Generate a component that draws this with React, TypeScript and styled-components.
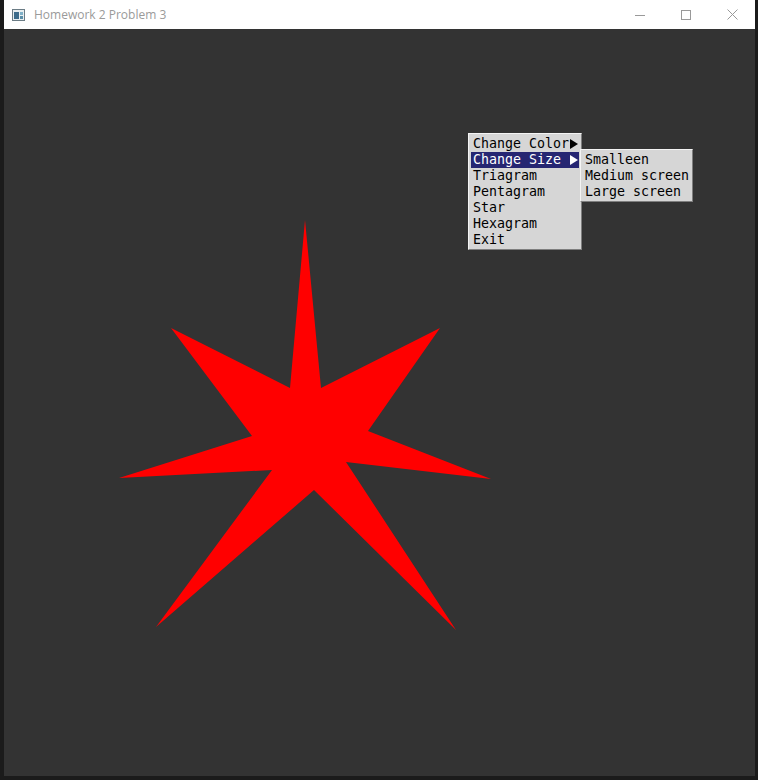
import React from "react";
import styled, { createGlobalStyle } from "styled-components";

const Global = createGlobalStyle`
  html, body { margin: 0; padding: 0; background: #1b1b1b; }
  body { width: 758px; height: 780px; overflow: hidden; }
`;

const Screen = styled.div`
  width: 758px;
  height: 780px;
  display: flex;
  flex-direction: row;
  background: #1b1b1b;
`;

const SideStrip = styled.div<{ $w: number }>`
  width: ${(p) => p.$w}px;
  flex: none;
  background: #1b1b1b;
`;

const Window = styled.div`
  width: 751px;
  height: 776px;
  display: flex;
  flex-direction: column;
  flex: none;
`;

const TitleBar = styled.div`
  height: 29px;
  background: #ffffff;
  display: flex;
  align-items: center;
  flex: none;
`;

const AppIcon = styled.svg`
  margin-left: 8px;
  width: 13px;
  height: 12px;
  flex: none;
`;

const Title = styled.div`
  margin-left: 9px;
  font-family: "Open Sans", "Noto Sans", sans-serif;
  font-size: 12px;
  color: #9a9a9a;
  flex: 1;
  margin-top: -1px;
`;

const Controls = styled.div`
  display: flex;
  height: 29px;
`;

const CtrlButton = styled.div`
  width: 46px;
  height: 29px;
  display: flex;
  align-items: center;
  justify-content: center;
`;

const Canvas = styled.div`
  position: relative;
  flex: 1;
  background: #333333;
  overflow: hidden;
`;

const StarSvg = styled.svg`
  position: absolute;
  left: 0;
  top: 0;
  width: 751px;
  height: 747px;
`;

const Menu = styled.div<{ $x: number; $y: number; $w: number }>`
  position: absolute;
  left: ${(p) => p.$x}px;
  top: ${(p) => p.$y}px;
  width: ${(p) => p.$w}px;
  box-sizing: border-box;
  background: #d6d6d6;
  border-top: 1px solid #f4f4f4;
  border-left: 1px solid #f4f4f4;
  border-right: 1px solid #7e7e7e;
  border-bottom: 1px solid #7e7e7e;
  padding: 2px 2px 1px 2px;
  display: flex;
  flex-direction: column;
`;

const Item = styled.div<{ $active?: boolean }>`
  position: relative;
  height: 16px;
  line-height: 16px;
  padding-left: 2px;
  font-family: "DejaVu Sans Mono", "Liberation Mono", monospace;
  font-size: 13.29px;
  white-space: pre;
  color: ${(p) => (p.$active ? "#ffffff" : "#000000")};
  background: ${(p) => (p.$active ? "#262672" : "transparent")};
`;

const Arrow = styled.span<{ $active?: boolean }>`
  position: absolute;
  right: 1px;
  top: 3px;
  width: 0;
  height: 0;
  border-top: 5px solid transparent;
  border-bottom: 5px solid transparent;
  border-left: 8px solid ${(p) => (p.$active ? "#ffffff" : "#000000")};
`;

const mainItems = [
  { label: "Change Color", sub: true },
  { label: "Change Size", sub: true, active: true },
  { label: "Triagram" },
  { label: "Pentagram" },
  { label: "Star" },
  { label: "Hexagram" },
  { label: "Exit" },
];

const subItems = ["Smalleen", "Medium screen", "Large screen"];

const starPoints = [
  [305, 220],
  [321, 388],
  [440, 328],
  [368, 431],
  [491, 479],
  [346, 462],
  [456, 630],
  [314, 490],
  [156, 627],
  [272, 470],
  [119, 478],
  [252, 436],
  [171, 328],
  [290, 388],
]
  .map(([x, y]) => `${x},${y}`)
  .join(" ");

export default function App() {
  return (
    <>
      <Global />
      <Screen>
        <SideStrip $w={4} />
        <Window>
          <TitleBar>
            <AppIcon viewBox="0 0 13 12">
              <rect x="0.5" y="0.5" width="12" height="11" fill="#e8eef0" stroke="#6b7c85" />
              <rect x="2" y="3" width="5" height="7" fill="#3c6b8a" />
              <rect x="8" y="3" width="3" height="3" fill="#7fb0c8" />
              <rect x="8" y="7" width="3" height="3" fill="#5a8ea8" />
            </AppIcon>
            <Title>Homework 2 Problem 3</Title>
            <Controls>
              <CtrlButton>
                <svg width="10" height="10" viewBox="0 0 10 10">
                  <line x1="0" y1="5.5" x2="10" y2="5.5" stroke="#999" strokeWidth="1" />
                </svg>
              </CtrlButton>
              <CtrlButton>
                <svg width="10" height="10" viewBox="0 0 10 10">
                  <rect x="0.5" y="0.5" width="9" height="9" fill="none" stroke="#999" strokeWidth="1" />
                </svg>
              </CtrlButton>
              <CtrlButton>
                <svg width="11" height="11" viewBox="0 0 11 11">
                  <path d="M0.5 0.5 L10.5 10.5 M10.5 0.5 L0.5 10.5" stroke="#999" strokeWidth="1" />
                </svg>
              </CtrlButton>
            </Controls>
          </TitleBar>
          <Canvas>
            <StarSvg viewBox="4 29 751 747">
              <polygon points={starPoints} fill="#ff0000" />
            </StarSvg>
            <Menu $x={464} $y={104} $w={114}>
              {mainItems.map((it) => (
                <Item key={it.label} $active={it.active}>
                  {it.label}
                  {it.sub && <Arrow $active={it.active} />}
                </Item>
              ))}
            </Menu>
            <Menu $x={576} $y={120} $w={113}>
              {subItems.map((s) => (
                <Item key={s}>{s}</Item>
              ))}
            </Menu>
          </Canvas>
        </Window>
        <SideStrip $w={3} />
      </Screen>
    </>
  );
}
